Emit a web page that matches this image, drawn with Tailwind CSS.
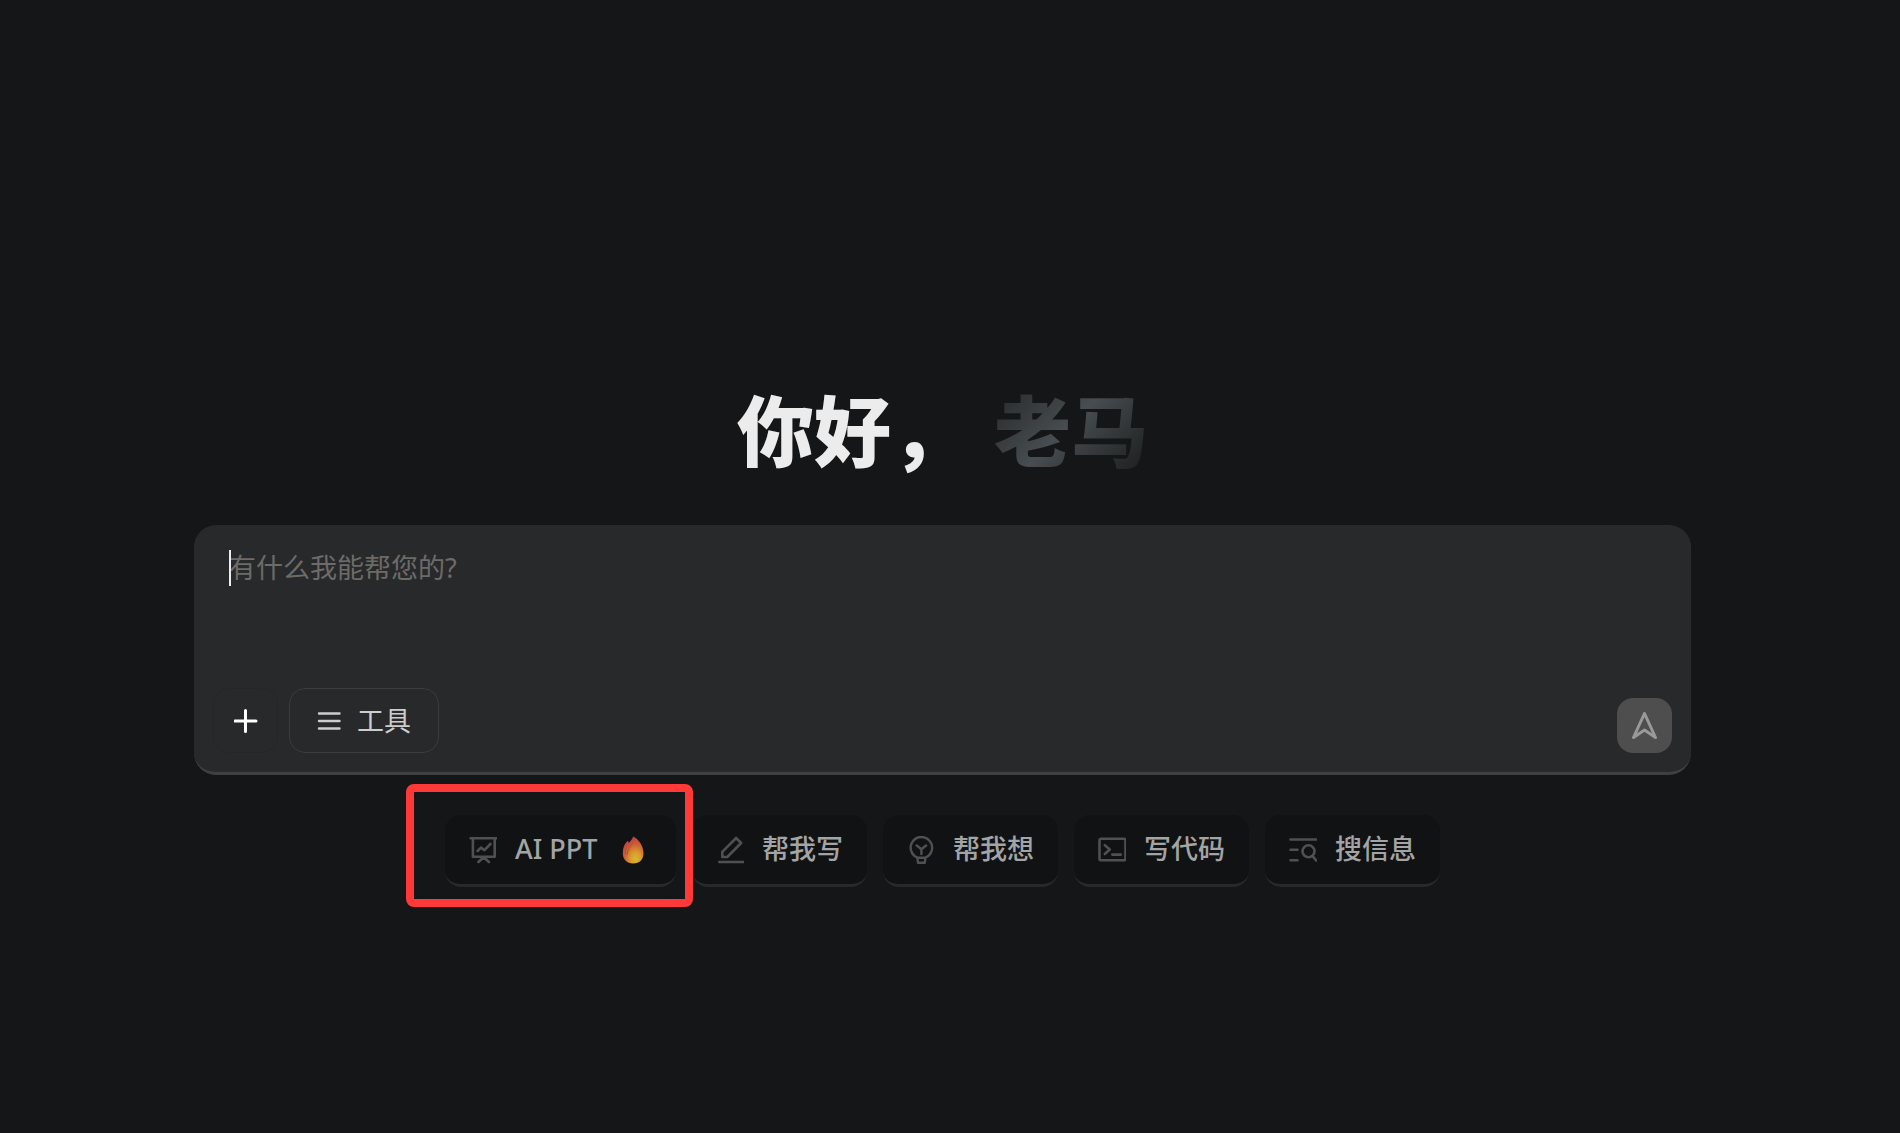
<!DOCTYPE html>
<html lang="zh-CN">
<head>
  <meta charset="UTF-8">
  <meta name="viewport" content="width=device-width, initial-scale=1">
  <title>你好</title>
  <script src="https://cdn.jsdelivr.net/npm/@tailwindcss/browser@4"></script>
</head>
<body class="min-h-screen bg-[#151618] pr-[15px] font-['Noto_Sans','Noto_Sans_CJK_SC',sans-serif] text-[27px] text-[#a3a4a5]">

  <main class="flex flex-col px-[194px] pt-[372px]">
    <!-- Greeting -->
    <h1 class="flex justify-center gap-[26px] text-[77px] leading-[112px] font-black font-['Noto_Sans_CJK_SC',sans-serif]">
      <span class="text-[#ececec]">你好，</span>
      <span class="bg-linear-135 from-[#222426] via-[#474d50] via-48% to-[#18191a] bg-clip-text text-transparent">老马</span>
    </h1>

    <!-- Prompt box -->
    <form class="mt-[41px] flex h-[250px] flex-col justify-between rounded-[22px] border-b-3 border-[#3f4042] bg-[#28292b] pt-5 pr-[19px] pb-[19px] pl-[19px]">
      <div class="relative flex pl-4">
        <textarea id="prompt" rows="2" aria-label="有什么我能帮您的?" placeholder="有什么我能帮您的?" class="w-full resize-none overflow-hidden leading-[46px] text-[#ececec] outline-none placeholder:text-[#6d6b68]"></textarea>
        <span class="absolute top-[5px] left-4 h-9 w-0.5 bg-[#ececf0]"></span>
      </div>

      <div class="flex items-end">
        <button type="button" aria-label="添加" class="flex size-[65px] items-center justify-center rounded-2xl border border-[#252628]">
          <svg class="size-6" viewBox="0 0 24 24" fill="none" stroke="#fff" stroke-width="3" stroke-linecap="round">
            <path d="M11.500 1.500v21M1 12h21"/>
          </svg>
        </button>
        <button type="button" class="ml-[11px] flex h-[65px] w-[150px] items-center justify-center gap-4 rounded-2xl border border-[#3a3b3d] pt-0.5 text-[#cdcdce]">
          <svg class="size-6" viewBox="0 0 24 24" fill="none" stroke="currentColor" stroke-width="2.4" stroke-linecap="round">
            <path d="M2 3.500h20.500M2 11h20.500M2 18.500h20.500"/>
          </svg>
          工具
        </button>
        <button type="submit" aria-label="发送" class="ml-auto flex size-[55px] items-center justify-center rounded-2xl bg-[#4e4e4e]">
          <svg class="size-7" viewBox="0 0 28 28" fill="none" stroke="#999" stroke-width="3" stroke-linejoin="round">
            <path d="M13.500 1.500 24.500 25.500 13.500 18 2.500 25.500Z"/>
          </svg>
        </button>
      </div>
    </form>

    <!-- Shortcuts -->
    <div class="mt-10 flex justify-center gap-4 font-medium">
      <div class="relative">
        <button type="button" class="flex h-[72px] w-[231px] items-center rounded-2xl border-b-3 border-[#28292b] bg-[#111214] px-6 whitespace-nowrap">
          <svg class="mr-[18px] size-7 shrink-0" viewBox="0 0 28 28" fill="none" stroke="#4f5052" stroke-width="2.6" stroke-linecap="round" stroke-linejoin="round">
            <path d="M1.600 2.200h26M3.900 2.500v18.300h21.800V2.500M9.400 26l5.300-4.800L19.900 26M8.600 15l3.400-3.400 3.400 2.600 6-6.200"/>
          </svg>
          AI PPT
          <svg class="mr-0.5 ml-auto size-7 shrink-0" viewBox="0 0 28 28">
            <defs>
              <radialGradient id="flame" cx="0.62" cy="0.82" r="0.8">
                <stop offset="0" stop-color="#d8b82c"/>
                <stop offset="0.300" stop-color="#d99c2d"/>
                <stop offset="0.650" stop-color="#cd6235"/>
                <stop offset="1" stop-color="#c53b3e"/>
              </radialGradient>
            </defs>
            <path fill="url(#flame)" d="M11.200 0.500C17 3.500 21.500 10 21.500 17.500c0 6-4 10-10.300 10C5 27.500.8 23.500.8 17.500.8 11.500 2.500 7.500 5.500 5c.3-.2.7 0 .8.400l.4 1.600C8.500 5.500 10 3.500 11.200.5Z"/>
            <path fill="none" stroke="#a84b32" stroke-width="0.800" d="M6.700 7C5 10 3.300 13 3.300 18M11 6c-2.500 5-5.500 7-6 13"/>
          </svg>
        </button>
        <!-- Highlight frame -->
        <div class="pointer-events-none absolute -top-[31px] -right-[17px] -bottom-5 -left-[39px] z-10 rounded-lg border-8 border-[#ff3838]"></div>
      </div>

      <button type="button" class="flex h-[72px] w-[175px] items-center gap-[18px] rounded-2xl border-b-3 border-[#28292b] bg-[#111214] px-6 whitespace-nowrap">
        <svg class="size-7 shrink-0" viewBox="0 0 28 28" fill="none" stroke="#4f5052" stroke-width="2.6" stroke-linecap="round" stroke-linejoin="round">
          <path d="M3.300 26h24M6.300 21v-5.200L20.100 2l5 5L11.300 21Z"/>
        </svg>
        帮我写
      </button>

      <button type="button" class="flex h-[72px] w-[175px] items-center gap-[18px] rounded-2xl border-b-3 border-[#28292b] bg-[#111214] px-6 whitespace-nowrap">
        <svg class="size-7 shrink-0" viewBox="0 0 28 28" fill="none" stroke="#4f5052" stroke-width="2.400" stroke-linecap="round" stroke-linejoin="round">
          <path d="M10.600 21.700a10.700 10.700 0 1 1 7.600 0M10.400 21.800h8l-.6 5h-6.800ZM9.700 9.500l4.700 3.800L19.100 9.500M14.400 13.300v4.700"/>
        </svg>
        帮我想
      </button>

      <button type="button" class="flex h-[72px] w-[175px] items-center gap-[18px] rounded-2xl border-b-3 border-[#28292b] bg-[#111214] px-6 whitespace-nowrap">
        <svg class="size-7 shrink-0" viewBox="0 0 28 28" fill="none" stroke="#4f5052" stroke-width="2.600" stroke-linecap="round" stroke-linejoin="round">
          <rect x="1.500" y="2.800" width="26" height="21.500" rx="1.500"/>
          <path d="m6.800 9.200 5 4.300-5 4.500M14.300 18.600h8.500"/>
        </svg>
        写代码
      </button>

      <button type="button" class="flex h-[72px] w-[175px] items-center gap-[18px] rounded-2xl border-b-3 border-[#28292b] bg-[#111214] px-6 whitespace-nowrap">
        <svg class="size-7 shrink-0" viewBox="0 0 28 28" fill="none" stroke="#4f5052" stroke-width="2.600" stroke-linecap="round">
          <path d="M1.500 3.500h25.500M1.500 13.800h7M1.500 24.200h7M23.500 20.200l3.700 4.300"/>
          <circle cx="19.500" cy="15.300" r="6"/>
        </svg>
        搜信息
      </button>
    </div>
  </main>

</body>
</html>
